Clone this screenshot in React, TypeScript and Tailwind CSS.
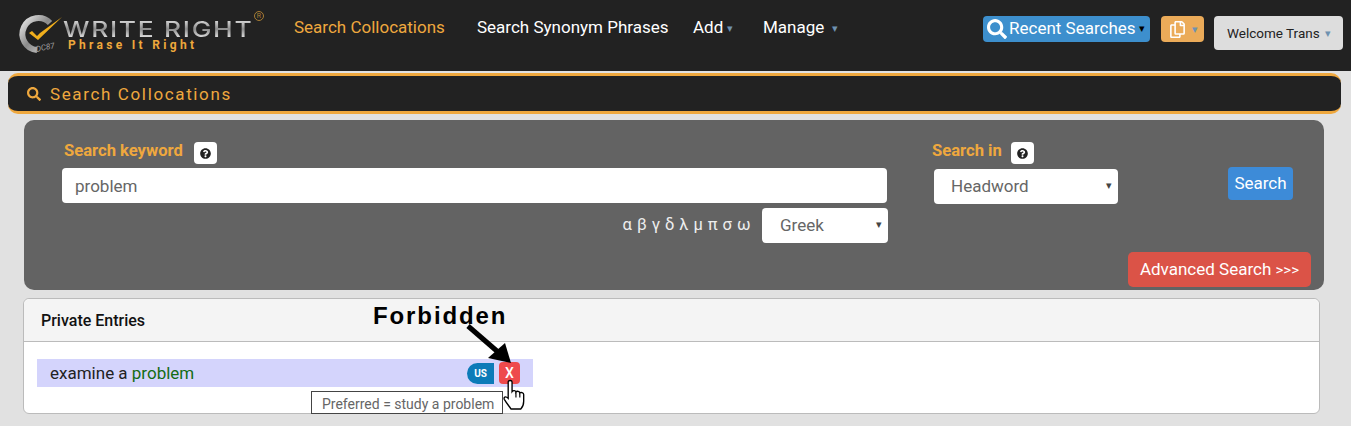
import React from 'react';
import { FaSearch, FaQuestionCircle, FaRegCopy } from 'react-icons/fa';

const Caret = ({ className = 'text-[#6f92b0]' }: { className?: string }) => (
  <span className={`text-[11px] leading-none ${className}`}>▾</span>
);

function Logo() {
  return (
    <div className="relative w-[250px] h-[45px] shrink-0">
      <svg width="48" height="45" viewBox="0 0 48 45" className="absolute left-0 top-0">
        <defs>
          <linearGradient id="ring" x1="0" y1="0" x2="1" y2="1">
            <stop offset="0" stopColor="#e8e8e8" />
            <stop offset="0.5" stopColor="#8a8a8a" />
            <stop offset="1" stopColor="#d0d0d0" />
          </linearGradient>
        </defs>
        <path d="M33 12 A16 16 0 1 0 20 39" fill="none" stroke="url(#ring)" strokeWidth="6" />
        <path d="M12 22 L21 29 L45 6 L23 22 L20 25 L15 20 Z" fill="#f0ae1c" />
      </svg>
      <span className="absolute left-[19px] top-[33px] text-[8px] leading-none text-[#a0a0a0] italic -rotate-12">DC87</span>
      <span className="absolute left-[46px] top-[9px] w-[157px] origin-left scale-x-[1.2] text-[22px] leading-[18px] tracking-[1.4px] whitespace-nowrap font-['Inter',sans-serif] font-medium bg-gradient-to-b from-[#dcdcdc] via-[#8c8c8c] to-[#e4e4e4] bg-clip-text text-transparent">
        WRITE RIGHT
      </span>
      <span className="absolute left-[237px] top-[0px] w-[10px] h-[10px] rounded-full border border-[#a87d34] text-[#a87d34] text-[7px] leading-[8px] text-center">R</span>
      <span className="absolute left-[51px] top-[28px] text-[12px] leading-[13px] tracking-[3.3px] whitespace-nowrap font-bold text-[#eea83c]">
        Phrase It Right
      </span>
    </div>
  );
}

function Header() {
  return (
    <header className="h-[71px] bg-[#222222] flex items-start text-white">
      <div className="pl-[17px] pt-[11px] w-[294px]">
        <Logo />
      </div>
      <nav className="flex items-center h-[56px] text-[17px]">
        <a className="text-[#efa83e] w-[183px]">Search Collocations</a>
        <a className="w-[216px]">Search Synonym Phrases</a>
        <a className="w-[70px] flex items-center gap-[4px]">Add <Caret /></a>
        <a className="flex items-center gap-[8px]">Manage <Caret /></a>
      </nav>
      <div className="ml-auto flex items-start pt-[16px] pr-[8px]">
        <button className="h-[26px] w-[167px] bg-[#3d8fcd] rounded-[4px] flex items-center pl-[4px] gap-[2px] text-[17px] whitespace-nowrap">
          <FaSearch size={20} />
          <span className="-mt-[1px]">Recent Searches</span>
          <span className="text-black text-[11px] ml-[1px]">▾</span>
        </button>
        <button className="ml-[11px] h-[26px] w-[43px] bg-[#ebab59] rounded-[4px] flex items-center pl-[8px] gap-[6px]">
          <FaRegCopy size={17} />
          <Caret />
        </button>
        <button className="ml-[10px] h-[34px] w-[129px] bg-[#dddddd] rounded-[4px] flex items-center pl-[13px] gap-[5px] text-[13.5px] text-[#222222] whitespace-nowrap">
          Welcome Trans <Caret />
        </button>
      </div>
    </header>
  );
}

function HelpBadge() {
  return (
    <span className="w-[23px] h-[22px] bg-white rounded-[4px] flex items-center justify-center">
      <FaQuestionCircle size={11} className="text-[#222222]" />
    </span>
  );
}

function Select({ label, width, pad }: { label: string; width: string; pad: string }) {
  return (
    <div className={`relative h-[35px] ${width}`}>
      <select className={`appearance-none w-full h-full bg-white rounded-[4px] ${pad} text-[17px] text-[#666666] outline-none`}>
        <option>{label}</option>
      </select>
      <span className="absolute right-[6px] top-[9px] text-[11px] text-[#444444] pointer-events-none">▾</span>
    </div>
  );
}

function SearchPanel() {
  return (
    <section className="ml-[24px] mr-[27px] mt-[6px] h-[170px] bg-[#636363] rounded-[10px] flex relative">
      <div className="ml-[38px] w-[826px] pt-[22px]">
        <div className="flex items-center h-[22px] pl-[2px] gap-[11px]">
          <span className="w-[119px] text-[16.6px] font-bold text-[#efa83e] -mt-[4px] whitespace-nowrap">Search keyword</span>
          <HelpBadge />
        </div>
        <input
          defaultValue="problem"
          className="mt-[4px] block w-[825px] h-[35px] bg-white rounded-[4px] pl-[13px] text-[17px] text-[#666666] outline-none"
        />
        <div className="mt-[5px] flex items-center justify-end gap-[11px]">
          <span className="text-[16.5px] text-[#eeeeee] tracking-[0.45px]">α β γ δ λ μ π σ ω</span>
          <Select label="Greek" width="w-[126px]" pad="pl-[18px]" />
        </div>
      </div>
      <div className="ml-[46px] w-[184px] pt-[22px]">
        <div className="flex items-center h-[22px] gap-[9px] -ml-[2px]">
          <span className="text-[16.6px] font-bold text-[#efa83e] -mt-[4px]">Search in</span>
          <HelpBadge />
        </div>
        <div className="mt-[5px]">
          <Select label="Headword" width="w-[184px]" pad="pl-[17px]" />
        </div>
      </div>
      <div className="ml-[110px] pt-[47px]">
        <button className="w-[65px] h-[33px] bg-[#3d8bd8] rounded-[4px] text-[17px] text-white">Search</button>
      </div>
      <button className="absolute right-[13px] bottom-[3px] w-[183px] h-[35px] bg-[#db5347] rounded-[5px] text-[17px] text-white whitespace-nowrap">
        Advanced Search <span className="text-[15px]">&gt;&gt;&gt;</span>
      </button>
    </section>
  );
}

function Annotation() {
  return (
    <>
      <span className="absolute left-[349px] top-[3px] text-[24px] leading-[28px] font-bold tracking-[1.9px] text-black font-['Liberation_Sans',sans-serif]">
        Forbidden
      </span>
      <svg width="60" height="50" viewBox="0 0 60 50" className="absolute left-[440px] top-[24px]">
        <path d="M4 3 L34 29" stroke="black" strokeWidth="5" />
        <path d="M47 40 L41 20 L24 35 Z" fill="black" />
      </svg>
      <div className="absolute left-[287px] top-[92px] w-[192px] h-[23px] bg-white border border-[#444444] pl-[10px] text-[14px] leading-[24px] text-[#666666] whitespace-nowrap">
        Preferred = study a problem
      </div>
      {/* hand cursor over the X button */}
      <svg width="24" height="31" viewBox="0 0 24 32" className="absolute left-[478px] top-[80px]">
        <path
          d="M6 3 C6 1 10 1 10 3 L10 13 C11 11.500 14 11.500 14 13.500 C15 12 18 12.500 18 14.500 C19 13.500 22 14 22 16 L22 23 C22 27 20 30 19 31 L9 31 C7 28 5 26 2 21 C1 19 3 17 6 20 Z"
          fill="white"
          stroke="black"
          strokeWidth="1.400"
        />
        <path d="M14 14 L14 19 M18 15 L18 19" stroke="black" strokeWidth="1.200" />
      </svg>
    </>
  );
}

function PrivateEntries() {
  return (
    <section className="ml-[23px] mr-[31px] mt-[8px] h-[116px] bg-white border border-[#bbbbbb] rounded-[6px] relative">
      <div className="h-[43px] bg-[#f4f4f4] border-b border-[#bbbbbb] rounded-t-[6px] flex items-center pl-[17px] pt-[2px] text-[16px] font-medium text-[#111111]">
        Private Entries
      </div>
      <div className="ml-[13px] mt-[17px] w-[496px] h-[28px] bg-[#d4d4fc] flex items-center pl-[13px] text-[17px] text-[#222222]">
        <span className="mt-[1px]">examine a <span className="text-[#146c14]">problem</span></span>
        <span className="ml-auto w-[27px] h-[21px] bg-[#0c7bb8] rounded-l-full flex items-center justify-center text-[10px] font-bold text-white">US</span>
        <span className="ml-[5px] mr-[13px] w-[21px] h-[22px] bg-[#ee4a4c] rounded-[4px] flex items-center justify-center text-[14px] font-medium text-white">X</span>
      </div>
      <Annotation />
    </section>
  );
}

export default function App() {
  return (
    <div className="h-[426px] overflow-hidden bg-[#e1e1e1] font-['Roboto',sans-serif]">
      <Header />
      <div className="ml-[8px] mr-[10px] mt-[2px] h-[41px] bg-[#222222] border-y-[3px] border-[#efa83e] rounded-[10px] flex items-center pl-[19px] gap-[9px] text-[#efa83e]">
        <FaSearch size={14} />
        <span className="text-[17px] tracking-[1.63px] mt-[2px]">Search Collocations</span>
      </div>
      <SearchPanel />
      <PrivateEntries />
    </div>
  );
}
